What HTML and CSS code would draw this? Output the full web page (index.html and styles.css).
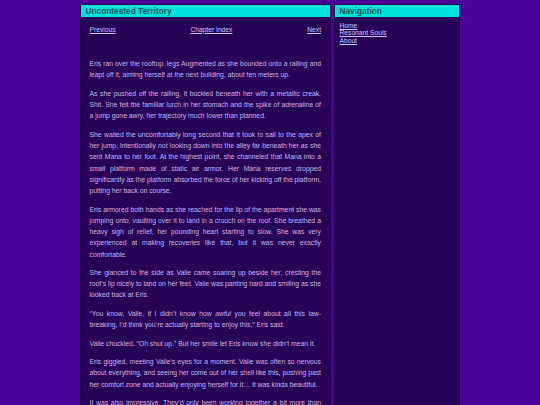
FILE: index.html
```html
<!DOCTYPE html>
<html lang="en">
<head>
<meta charset="utf-8">
<title>Uncontested Territory</title>
<link rel="stylesheet" href="styles.css">
</head>
<body>
<div class="page">
  <main class="panel main">
    <h1 class="head">Uncontested Territory</h1>
    <div class="main-body">
      <nav class="chapnav">
        <a href="#">Previous</a>
        <a href="#">Chapter Index</a>
        <a href="#">Next</a>
      </nav>
      <p>Eris ran over the rooftop, legs Augmented as she bounded onto a railing and leapt off it, aiming herself at the next building, about ten meters up.</p>
      <p>As she pushed off the railing, it buckled beneath her with a metallic creak. Shit. She felt the familiar lurch in her stomach and the spike of adrenaline of a jump gone awry, her trajectory much lower than planned.</p>
      <p>She waited the uncomfortably long second that it took to sail to the apex of her jump, intentionally not looking down into the alley far beneath her as she sent Mana to her foot. At the highest point, she channeled that Mana into a small platform made of static air armor. Her Mana reserves dropped significantly as the platform absorbed the force of her kicking off the platform, putting her back on course.</p>
      <p>Eris armored both hands as she reached for the lip of the apartment she was jumping onto, vaulting over it to land in a crouch on the roof. She breathed a heavy sigh of relief, her pounding heart starting to slow. She was very experienced at making recoveries like that, but it was never exactly comfortable.</p>
      <p>She glanced to the side as Valie came soaring up beside her, cresting the roof’s lip nicely to land on her feet. Valie was panting hard and smiling as she looked back at Eris.</p>
      <p>“You know, Valie, if I didn’t know how <em>awful</em> you feel about all this law-breaking, I’d think you’re actually starting to enjoy this,” Eris said.</p>
      <p>Valie chuckled. “Oh shut up.” But her smile let Eris know she didn’t mean it.</p>
      <p>Eris giggled, meeting Valie’s eyes for a moment. Valie was often so nervous about everything, and seeing her come out of her shell like this, pushing past her comfort zone and actually enjoying herself for it… It was kinda beautiful.</p>
      <p>It was also impressive. They’d only been working together a bit more than three weeks, and already Valie had come so far from the timid girl she had been when they first met.</p>
    </div>
  </main>
  <aside class="panel side">
    <h2 class="head">Navigation</h2>
    <div class="side-body">
      <a href="#">Home</a>
      <a href="#">Resonant Souls</a>
      <a href="#">About</a>
    </div>
  </aside>
</div>
</body>
</html>
```
FILE: styles.css
```css
html, body {
  margin: 0;
  padding: 0;
  background: #4b0096;
  height: 100%;
  overflow: hidden;
}
body {
  font-family: "Liberation Sans", Arial, sans-serif;
}
.page {
  width: 380px;
  margin: 4px auto 0;
  display: flex;
  gap: 3px;
  min-height: 420px;
}
.panel {
  background: #270058;
  border: 1px solid #1e0049;
  box-sizing: border-box;
}
.main {
  width: 251px;
}
.side {
  width: 126px;
}
.head {
  margin: 0;
  background: #00e2dc;
  color: #075a5a;
  font-size: 8.3px;
  font-weight: bold;
  line-height: 12px;
  height: 12px;
  padding: 0 4.5px;
}
.main-body {
  padding: 8.5px 9px 0 8.5px;
}
.chapnav {
  display: flex;
  justify-content: space-between;
  font-size: 6.7px;
  line-height: 7.7px;
  margin-bottom: 25px;
}
a {
  color: #c6c8ff;
  text-decoration: underline;
}
.main-body p {
  margin: 0 0 7.2px;
  font-size: 6.8px;
  line-height: 11.25px;
  color: #cbb6ee;
  text-align: justify;
}
.side-body {
  padding: 4.5px 4.5px;
  font-size: 6.7px;
  line-height: 7.7px;
}
.side-body a {
  display: block;
}
```
